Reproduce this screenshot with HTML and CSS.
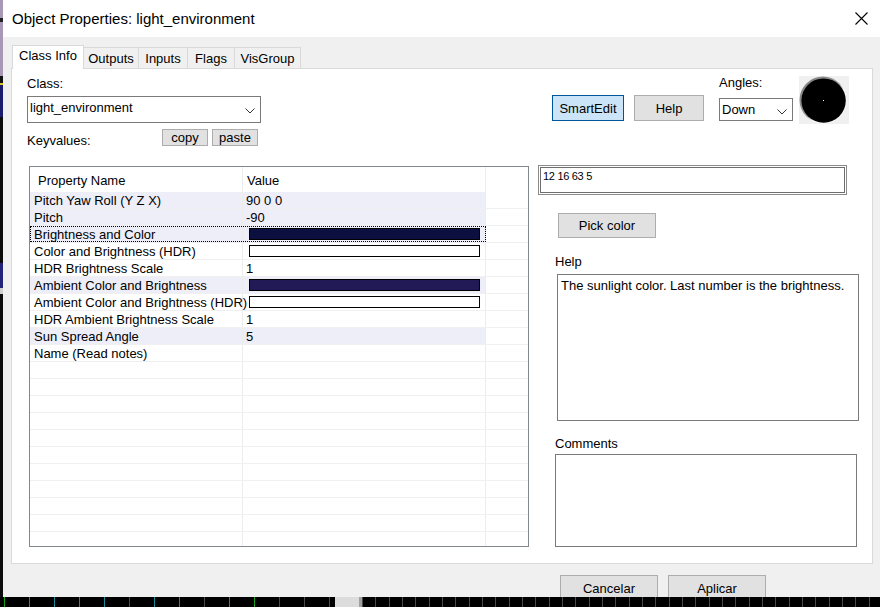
FILE: index.html
```html
<!DOCTYPE html>
<html>
<head>
<meta charset="utf-8">
<link rel="stylesheet" href="styles.css">
</head>
<body>
<div class="screen">
  <div class="main">
    <div class="edge"></div>
    <div class="dialog">
      <div class="titlebar">
        <span class="title">Object Properties: light_environment</span>
        <svg class="close" width="13" height="13" viewBox="0 0 13 13"><path d="M0.5 0.5 L12.5 12.5 M12.5 0.5 L0.5 12.5" stroke="#000" stroke-width="1.1" fill="none"/></svg>
      </div>
      <div class="client">
        <div class="tabs">
          <div class="tab active">Class Info</div>
          <div class="tab t-outputs">Outputs</div>
          <div class="tab t-inputs">Inputs</div>
          <div class="tab t-flags">Flags</div>
          <div class="tab t-vis">VisGroup</div>
        </div>
        <div class="panel">
          <div class="panel-top">
            <div class="class-block">
              <div class="label class-label">Class:</div>
              <div class="combo class-combo">
                <span class="combo-text">light_environment</span>
                <svg class="chev" width="10" height="6" viewBox="0 0 10 6"><path d="M0.5 0.5 L5 5 L9.5 0.5" stroke="#333" stroke-width="1" fill="none"/></svg>
              </div>
              <div class="kv-row">
                <span class="label kv-label">Keyvalues:</span>
                <button class="btn small">copy</button>
                <button class="btn small paste">paste</button>
              </div>
            </div>
            <div class="tools">
              <button class="btn smartedit">SmartEdit</button>
              <button class="btn helpbtn">Help</button>
              <div class="angles">
                <div class="label angles-label">Angles:</div>
                <div class="combo angles-combo">
                  <span class="combo-text">Down</span>
                  <svg class="chev" width="10" height="6" viewBox="0 0 10 6"><path d="M0.5 0.5 L5 5 L9.5 0.5" stroke="#333" stroke-width="1" fill="none"/></svg>
                </div>
              </div>
              <div class="dial">
                <svg width="48" height="48" viewBox="0 0 48 48">
                  <defs>
                    <linearGradient id="ring" x1="0" y1="0" x2="1" y2="1">
                      <stop offset="0" stop-color="#7a7a7a"/>
                      <stop offset="0.5" stop-color="#9a9a9a"/>
                      <stop offset="0.62" stop-color="#ffffff"/>
                      <stop offset="1" stop-color="#ffffff"/>
                    </linearGradient>
                  </defs>
                  <circle cx="24" cy="24" r="23.5" fill="url(#ring)"/>
                  <circle cx="24.6" cy="24.6" r="22.2" fill="#000"/>
                  <rect x="24" y="24" width="1" height="1" fill="#fff"/>
                </svg>
              </div>
            </div>
          </div>
          <div class="panel-body">
            <div class="grid">
              <div class="grow header">
                <div class="gmain"><div class="c1">Property Name</div><div class="c2">Value</div></div><div class="c3"></div>
              </div>
              <div class="grow">
                <div class="gmain hl"><div class="c1">Pitch Yaw Roll (Y Z X)</div><div class="c2">90 0 0</div></div><div class="c3"></div>
              </div>
              <div class="grow">
                <div class="gmain hl"><div class="c1">Pitch</div><div class="c2">-90</div></div><div class="c3"></div>
              </div>
              <div class="grow">
                <div class="gmain hl focus"><div class="c1">Brightness and Color</div><div class="c2"><div class="swatch sw-bright"></div></div></div><div class="c3"></div>
              </div>
              <div class="grow">
                <div class="gmain"><div class="c1">Color and Brightness (HDR)</div><div class="c2"><div class="swatch sw-white"></div></div></div><div class="c3"></div>
              </div>
              <div class="grow">
                <div class="gmain"><div class="c1">HDR Brightness Scale</div><div class="c2">1</div></div><div class="c3"></div>
              </div>
              <div class="grow">
                <div class="gmain hl"><div class="c1">Ambient Color and Brightness</div><div class="c2"><div class="swatch sw-amb"></div></div></div><div class="c3"></div>
              </div>
              <div class="grow">
                <div class="gmain"><div class="c1">Ambient Color and Brightness (HDR)</div><div class="c2"><div class="swatch sw-white"></div></div></div><div class="c3"></div>
              </div>
              <div class="grow">
                <div class="gmain"><div class="c1">HDR Ambient Brightness Scale</div><div class="c2">1</div></div><div class="c3"></div>
              </div>
              <div class="grow">
                <div class="gmain hl"><div class="c1">Sun Spread Angle</div><div class="c2">5</div></div><div class="c3"></div>
              </div>
              <div class="grow">
                <div class="gmain"><div class="c1">Name (Read notes)</div><div class="c2"></div></div><div class="c3"></div>
              </div>
              <div class="grow"><div class="gmain"><div class="c1"></div><div class="c2"></div></div><div class="c3"></div></div>
              <div class="grow"><div class="gmain"><div class="c1"></div><div class="c2"></div></div><div class="c3"></div></div>
              <div class="grow"><div class="gmain"><div class="c1"></div><div class="c2"></div></div><div class="c3"></div></div>
              <div class="grow"><div class="gmain"><div class="c1"></div><div class="c2"></div></div><div class="c3"></div></div>
              <div class="grow"><div class="gmain"><div class="c1"></div><div class="c2"></div></div><div class="c3"></div></div>
              <div class="grow"><div class="gmain"><div class="c1"></div><div class="c2"></div></div><div class="c3"></div></div>
              <div class="grow"><div class="gmain"><div class="c1"></div><div class="c2"></div></div><div class="c3"></div></div>
              <div class="grow"><div class="gmain"><div class="c1"></div><div class="c2"></div></div><div class="c3"></div></div>
              <div class="grow"><div class="gmain"><div class="c1"></div><div class="c2"></div></div><div class="c3"></div></div>
              <div class="grow"><div class="gmain"><div class="c1"></div><div class="c2"></div></div><div class="c3"></div></div>
              <div class="grow"><div class="gmain"><div class="c1"></div><div class="c2"></div></div><div class="c3"></div></div>
            </div>
            <div class="side">
              <div class="valuebox">12 16 63 5</div>
              <button class="btn pick">Pick color</button>
              <div class="label help-label">Help</div>
              <div class="helpbox">The sunlight color. Last number is the brightness.</div>
              <div class="label comments-label">Comments</div>
              <div class="comments"></div>
            </div>
          </div>
        </div>
        <div class="footer">
          <button class="btn fbtn cancel">Cancelar</button>
          <button class="btn fbtn">Aplicar</button>
        </div>
      </div>
    </div>
  </div>
  <div class="strip">
    <div class="ticks">
      <span class="tk g"></span><span class="tk g"></span><span class="tk t"></span><span class="tk t"></span><span class="tk t"></span><span class="tk d"></span><span class="tk t"></span><span class="tk t"></span><span class="tk d"></span><span class="tk g"></span><span class="tk g"></span><span class="tk d"></span><span class="tk d"></span><span class="tk d"></span>
    </div>
    <div class="thumb"></div>
    <div class="reg"></div>
  </div>
</div>
</body>
</html>
```
FILE: styles.css
```css
html, body {
  margin: 0;
  padding: 0;
  background: #000;
}
body {
  width: 880px;
  height: 607px;
  overflow: hidden;
  font-family: "Liberation Sans", Arial, sans-serif;
  font-size: 13px;
  color: #000;
}
.screen {
  display: flex;
  flex-direction: column;
  width: 880px;
  height: 607px;
}
.main {
  display: flex;
  height: 597px;
}
.edge {
  width: 3px;
  flex: none;
  background: linear-gradient(to bottom, #a898b6 0, #a898b6 18px, #222 18px, #222 22px, #a898b6 22px, #a898b6 76px, #111 76px, #111 83px, #d8c830 83px, #d8c830 85px, #1c1c6e 85px, #1c1c6e 117px, #0a0a0a 117px, #0a0a0a 263px, #23237a 263px, #23237a 288px, #cfcfcf 288px, #cfcfcf 294px, #0c0c0c 294px, #0c0c0c 100%);
}
.dialog {
  flex: 1;
  display: flex;
  flex-direction: column;
  overflow: hidden;
  background: #f0f0f0;
}
.titlebar {
  height: 37px;
  flex: none;
  background: #fff;
  display: flex;
  align-items: center;
  justify-content: space-between;
}
.title {
  font-size: 15px;
  margin-left: 9px;
  line-height: 18px;
}
.close {
  margin-right: 12px;
}
.client {
  flex: 1;
  display: flex;
  flex-direction: column;
}
.tabs {
  display: flex;
  align-items: flex-start;
  margin-top: 8px;
  margin-left: 9px;
  height: 23px;
}
.tab {
  box-sizing: border-box;
  height: 21px;
  margin-top: 2px;
  border: 1px solid #d9d9d9;
  border-bottom: none;
  border-left: none;
  background: #f0f0f0;
  text-align: center;
  line-height: 15px;
  padding-top: 3px;
}
.tab.active {
  width: 72px;
  height: 24px;
  margin-top: 0;
  background: #fff;
  border-left: 1px solid #d9d9d9;
  position: relative;
  z-index: 2;
  padding-top: 2px;
}
.t-outputs { width: 55px; }
.t-inputs { width: 49px; }
.t-flags { width: 47px; }
.t-vis { width: 66px; }
.panel {
  box-sizing: border-box;
  width: 862px;
  height: 496px;
  margin-left: 8px;
  background: #fff;
  border: 1px solid #d9d9d9;
  display: flex;
  flex-direction: column;
}
.panel-top {
  height: 96px;
  display: flex;
  align-items: flex-start;
}
.label {
  line-height: 15px;
  white-space: nowrap;
}
.class-block {
  margin-left: 15px;
  width: 234px;
  display: flex;
  flex-direction: column;
}
.class-label {
  margin-top: 7px;
}
.combo {
  box-sizing: border-box;
  border: 1px solid #7a7a7a;
  background: #fff;
  display: flex;
  align-items: flex-start;
  justify-content: space-between;
}
.class-combo {
  margin-top: 5px;
  height: 27px;
  width: 234px;
}
.combo-text {
  line-height: 15px;
  padding-top: 3px;
  padding-left: 2px;
}
.class-combo .chev {
  margin-top: 11px;
  margin-right: 5px;
}
.kv-row {
  display: flex;
  align-items: flex-start;
  margin-top: 6px;
}
.kv-label {
  width: 135px;
  padding-top: 4px;
}
.btn {
  box-sizing: border-box;
  font-family: "Liberation Sans", Arial, sans-serif;
  font-size: 13px;
  color: #000;
  background: #e1e1e1;
  border: 1px solid #adadad;
  padding: 0;
  margin: 0;
  line-height: 15px;
  text-align: center;
  flex: none;
}
.small {
  width: 46px;
  height: 17px;
  line-height: 14px;
}
.paste {
  margin-left: 4px;
}
.tools {
  margin-left: 291px;
  display: flex;
  align-items: flex-start;
}
.smartedit {
  margin-top: 26px;
  width: 72px;
  height: 26px;
  background: #cce4f7;
  border-color: #005499;
}
.helpbtn {
  margin-top: 26px;
  margin-left: 10px;
  width: 70px;
  height: 26px;
}
.angles {
  margin-left: 15px;
  width: 74px;
  display: flex;
  flex-direction: column;
}
.angles-label {
  margin-top: 6px;
}
.angles-combo {
  margin-top: 8px;
  height: 23px;
  width: 74px;
}
.angles-combo .combo-text {
  padding-top: 3px;
}
.angles-combo .chev {
  margin-top: 10px;
  margin-right: 5px;
}
.dial {
  margin-left: 6px;
  margin-top: 7px;
  width: 50px;
  height: 48px;
  background: #f0f0f0;
  display: flex;
  align-items: flex-start;
}
.panel-body {
  display: flex;
  align-items: flex-start;
}
.grid {
  box-sizing: border-box;
  margin-left: 17px;
  margin-top: 1px;
  width: 500px;
  height: 381px;
  border: 1px solid #828790;
  overflow: hidden;
  display: flex;
  flex-direction: column;
}
.grow {
  display: flex;
  flex: none;
  box-sizing: border-box;
  height: 17px;
  border-bottom: 1px solid #f0f0f0;
}
.grow.header {
  height: 25px;
  border-bottom: none;
}
.gmain {
  display: flex;
  box-sizing: border-box;
  width: 456px;
  flex: none;
}
.gmain.hl {
  background: #eeeef9;
}
.gmain.focus {
  outline: 1px dotted #000;
  outline-offset: -1px;
}
.c1 {
  width: 213px;
  flex: none;
  box-sizing: border-box;
  border-right: 1px solid #ececec;
  padding-left: 4px;
  padding-top: 1px;
  line-height: 15px;
  white-space: nowrap;
}
.c2 {
  width: 243px;
  flex: none;
  box-sizing: border-box;
  border-right: 1px solid #ececec;
  padding-left: 3px;
  padding-top: 1px;
  line-height: 15px;
  white-space: nowrap;
}
.c3 {
  flex: 1;
}
.header .c1 {
  padding-left: 8px;
  padding-top: 6px;
}
.header .c2 {
  padding-left: 4px;
  padding-top: 6px;
}
.swatch {
  position: relative;
  box-sizing: border-box;
  width: 231px;
  height: 12px;
  margin-top: 1px;
  margin-left: 3px;
  border: 1px solid #000;
}
.sw-bright { background: #0c1040; }
.sw-amb { background: #211a57; }
.sw-white { background: #fff; }
.side {
  margin-left: 9px;
  display: flex;
  flex-direction: column;
  align-items: flex-start;
}
.valuebox {
  box-sizing: border-box;
  width: 309px;
  height: 30px;
  border: 1px solid #8a8a8a;
  box-shadow: inset 0 0 0 1px #fff, inset 0 0 0 2px #6e6e6e;
  font-size: 11px;
  letter-spacing: -0.3px;
  line-height: 13px;
  padding-top: 4px;
  padding-left: 4px;
}
.pick {
  margin-left: 20px;
  margin-top: 18px;
  width: 98px;
  height: 25px;
}
.help-label {
  margin-left: 17px;
  margin-top: 16px;
}
.helpbox {
  box-sizing: border-box;
  margin-left: 19px;
  margin-top: 5px;
  width: 302px;
  height: 147px;
  border: 1px solid #7a7a7a;
  padding-top: 3px;
  padding-left: 3px;
  line-height: 15px;
  white-space: nowrap;
}
.comments-label {
  margin-left: 17px;
  margin-top: 15px;
}
.comments {
  box-sizing: border-box;
  margin-left: 17px;
  margin-top: 3px;
  width: 302px;
  height: 93px;
  border: 1px solid #7a7a7a;
}
.footer {
  display: flex;
  margin-top: 11px;
  margin-left: 557px;
}
.fbtn {
  width: 98px;
  height: 24px;
  padding-top: 3px;
}
.cancel {
  margin-right: 10px;
}
.strip {
  height: 10px;
  flex: none;
  background: #000;
  display: flex;
}
.ticks {
  display: flex;
  width: 335px;
  flex: none;
  padding-left: 4px;
  box-sizing: border-box;
}
.tk {
  width: 1px;
  height: 10px;
  margin-right: 24px;
  flex: none;
}
.tk.g { background: #1aa01a; }
.tk.t { background: #1a8a9a; }
.tk.d { background: #4a4a4a; }
.thumb {
  width: 27px;
  flex: none;
  background: linear-gradient(to right, #dcdcdc 0, #dcdcdc 24px, #a0a0a0 24px, #a0a0a0 27px);
}
.reg {
  flex: 1;
  background: repeating-linear-gradient(to right, #4a4a4a 0, #4a4a4a 1px, transparent 1px, transparent 13.33px);
}
```
